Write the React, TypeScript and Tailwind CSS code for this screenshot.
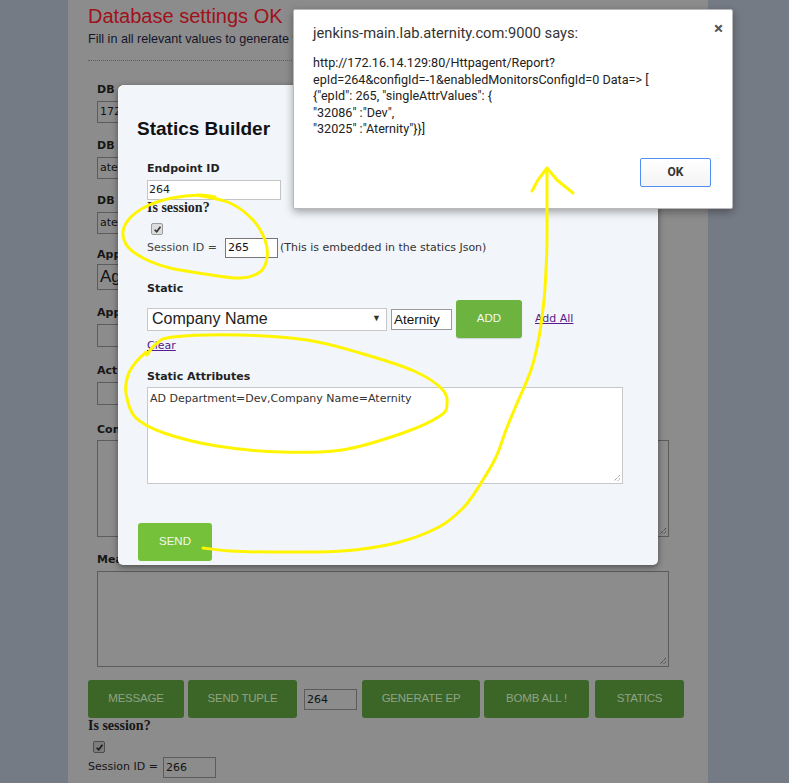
type Pt = [number, number];

// catmull-rom through the points, for the hand-drawn marker strokes
function smooth(pts: Pt[]) {
  let d = `M${pts[0][0]},${pts[0][1]}`;
  for (let i = 0; i < pts.length - 1; i++) {
    const p0 = pts[i - 1] || pts[i];
    const p1 = pts[i];
    const p2 = pts[i + 1];
    const p3 = pts[i + 2] || p2;
    const c1x = p1[0] + (p2[0] - p0[0]) / 6;
    const c1y = p1[1] + (p2[1] - p0[1]) / 6;
    const c2x = p2[0] - (p3[0] - p1[0]) / 6;
    const c2y = p2[1] - (p3[1] - p1[1]) / 6;
    d += ` C${c1x},${c1y} ${c2x},${c2y} ${p2[0]},${p2[1]}`;
  }
  return d;
}

const loopSession: Pt[] = [
  [197, 195], [230, 203], [253, 220], [265, 240], [267, 258], [260, 272], [240, 278],
  [205, 274], [170, 268], [145, 259], [128, 247], [123, 232], [130, 218], [147, 206],
  [172, 198], [200, 195], [215, 197],
];

const loopAttrs: Pt[] = [
  [147, 355], [156, 344], [173, 337], [240, 335], [307, 340], [360, 353], [414, 371],
  [442, 389], [447, 404], [440, 416], [403, 433], [342, 450], [281, 452], [217, 446],
  [164, 433], [135, 417], [126, 393], [128, 375], [136, 362], [146, 352],
];

const arrow: Pt[] = [
  [203, 548], [230, 551], [271, 552], [342, 551], [396, 543], [439, 527], [464, 507],
  [481, 483], [496, 457], [506, 430], [515, 408], [531, 370], [539, 337], [544, 300],
  [546, 270], [547, 240], [547, 200], [547, 169],
];

function Check({ dim }: { dim?: boolean }) {
  return (
    <span
      className={
        dim
          ? "flex h-[12px] w-[12px] items-center justify-center rounded-[2px] border border-[#4d4d4d] bg-[#7d7d7d]"
          : "flex h-[12px] w-[12px] items-center justify-center rounded-[2px] border border-[#9c9c9c] bg-[#dcdcdc]"
      }
    >
      <svg viewBox="0 0 10 10" className="h-[9px] w-[9px]">
        <path d="M1.8 5.3 L4.1 7.6 L8.3 2" fill="none" stroke={dim ? "#1c1c1c" : "#333"} strokeWidth="1.8" />
      </svg>
    </span>
  );
}

function Grip({ color }: { color: string }) {
  return (
    <svg viewBox="0 0 8 8" className="absolute bottom-[1px] right-[1px] h-[8px] w-[8px]">
      <path d="M7 1 L1 7 M7 4.5 L4.5 7" stroke={color} strokeWidth="1" strokeDasharray="1 1" />
    </svg>
  );
}

function PageButton({ label, className }: { label: string; className: string }) {
  return (
    <div
      className={`flex h-[38px] shrink-0 items-center justify-center rounded-[3px] bg-[#3c6528] font-['Liberation_Sans',sans-serif] text-[11.5px] tracking-[-0.2px] text-[#8ea484] ${className}`}
    >
      {label}
    </div>
  );
}

export default function App() {
  const dimLabel = "font-bold leading-[16px] text-[#161616]";
  const dimInput = "border border-[#5c5c5c] bg-[#8c8c8c] px-[2px] text-[#121212]";

  return (
    <div className="relative h-[783px] w-[789px] overflow-hidden bg-[#757b85]">
      {/* page behind the dialogs */}
      <div className="ml-[68px] h-full w-[640px] bg-[#8c8c8c] pl-[20px] pr-[20px] font-['DejaVu_Sans',sans-serif] text-[11px] text-[#151515]">
        <h1 className="pt-[4px] font-['Liberation_Sans',sans-serif] text-[20px] leading-[24px] text-[#a0111b]">
          Database settings OK
        </h1>
        <p className="mt-[3px] whitespace-nowrap font-['Liberation_Sans',sans-serif] text-[12.6px] leading-[16px] text-[#15152a]">
          Fill in all relevant values to generate the simulation data and press one of the buttons below
        </p>
        <div className="mt-[13px] border-t border-dotted border-[#5e5e5e]" />

        <div className="pl-[9px]">
          <div className={`mt-[21px] ${dimLabel}`}>DB Server:</div>
          <div className={`mt-[3px] h-[22px] w-[220px] leading-[20px] ${dimInput}`}>172.16.14.129</div>

          <div className={`mt-[15px] ${dimLabel}`}>DB User</div>
          <div className={`mt-[3px] h-[22px] w-[220px] leading-[20px] ${dimInput}`}>aternity</div>

          <div className={`mt-[14px] ${dimLabel}`}>DB Password</div>
          <div className={`mt-[3px] h-[22px] w-[220px] leading-[20px] ${dimInput}`}>aternity</div>

          <div className={`mt-[13px] ${dimLabel}`}>Application</div>
          <div className={`mt-[1px] h-[26px] w-[260px] font-['Liberation_Sans',sans-serif] text-[17px] leading-[24px] ${dimInput}`}>
            Agent
          </div>

          <div className={`mt-[15px] ${dimLabel}`}>App Version</div>
          <div className={`mt-[3px] h-[23px] w-[220px] ${dimInput}`} />

          <div className={`mt-[16px] ${dimLabel}`}>Activity</div>
          <div className={`mt-[3px] h-[23px] w-[220px] ${dimInput}`} />

          <div className={`mt-[17px] ${dimLabel}`}>Context</div>
          <div className={`relative mt-[2px] h-[97px] w-[572px] ${dimInput}`}>
            <Grip color="#2a2a2a" />
          </div>

          <div className="mt-[15px] flex items-center leading-[16px]">
            <span className="w-[93px] font-bold text-[#161616]">Measurements</span>
            <span className="text-[#2d1b5e] underline">Measurement template help [?]</span>
          </div>
          <div className={`relative mt-[3px] h-[96px] w-[572px] ${dimInput}`}>
            <Grip color="#2a2a2a" />
          </div>
        </div>

        <div className="mt-[13px] flex items-center">
          <PageButton label="MESSAGE" className="w-[96px]" />
          <PageButton label="SEND TUPLE" className="ml-[4px] w-[109px]" />
          <div className={`ml-[7px] h-[21px] w-[53px] shrink-0 leading-[19px] ${dimInput}`}>264</div>
          <PageButton label="GENERATE EP" className="ml-[5px] w-[118px]" />
          <PageButton label="BOMB ALL !" className="ml-[4px] w-[105px]" />
          <PageButton label="STATICS" className="ml-[6px] w-[89px]" />
        </div>
        <div className="font-['Liberation_Serif',serif] text-[14px] font-bold leading-[16px] text-[#161616]">
          Is session?
        </div>
        <div className="ml-[5px] mt-[7px]">
          <Check dim />
        </div>
        <div className="mt-[4px] flex items-center">
          <span className="text-[#161616]">Session ID =</span>
          <div className={`ml-[5px] h-[21px] w-[53px] leading-[19px] ${dimInput}`}>266</div>
        </div>
      </div>

      {/* Statics Builder modal */}
      <div className="absolute left-[118px] top-[85px] h-[480px] w-[540px] rounded-[5px] bg-[#f2f5fa] pl-[19px] pt-[32px] font-['DejaVu_Sans',sans-serif] text-[11px] text-[#222] shadow-[0_2px_6px_rgba(0,0,0,0.45)]">
        <h2 className="font-['Liberation_Sans',sans-serif] text-[19px] font-bold leading-[24px] text-[#111]">
          Statics Builder
        </h2>
        <div className="pl-[10px]">
          <div className="mt-[20px] font-bold leading-[16px]">Endpoint ID</div>
          <div className="mt-[3px] h-[20px] w-[134px] border border-[#c4c4c4] bg-white px-[1px] leading-[18px] text-[#222]">
            264
          </div>
          <div className="font-['Liberation_Serif',serif] text-[14px] font-bold leading-[16px] text-[#222]">
            Is session?
          </div>
          <div className="ml-[4px] mt-[7px]">
            <Check />
          </div>
          <div className="mt-[3px] flex items-center">
            <span className="text-[#444]">Session ID =</span>
            <div className="ml-[8px] h-[20px] w-[53px] border border-[#767676] bg-white px-[2px] leading-[18px] text-[#111]">
              265
            </div>
            <span className="ml-[2px] text-[#333]">(This is embedded in the statics Json)</span>
          </div>

          <div className="mt-[23px] font-bold leading-[16px]">Static</div>
          <div className="mt-[3px] flex h-[38px] items-center">
            <div className="flex h-[23px] w-[240px] items-center justify-between border border-[#c8c8c8] bg-white pl-[4px] pr-[5px] font-['Liberation_Sans',sans-serif] text-[16px] text-[#222]">
              <span>Company Name</span>
              <span className="text-[9px] text-[#333]">▼</span>
            </div>
            <div className="ml-[4px] h-[21px] w-[61px] border border-[#9a9a9a] bg-white pl-[2px] font-['Liberation_Sans',sans-serif] text-[13.5px] leading-[19px] text-[#111]">
              Aternity
            </div>
            <div className="ml-[4px] flex h-[38px] w-[66px] items-center justify-center rounded-[3px] bg-[#6cb33f] font-['Liberation_Sans',sans-serif] text-[11.5px] text-[#f4f8ef] shadow-[0_1px_1px_rgba(0,0,0,0.15)]">
              ADD
            </div>
            <span className="ml-[13px] text-[#551a8b] underline">Add All</span>
          </div>
          <div className="leading-[16px] text-[#551a8b] underline">Clear</div>

          <div className="mt-[15px] font-bold leading-[16px]">Static Attributes</div>
          <div className="relative mt-[2px] h-[97px] w-[476px] border border-[#c8c8c8] bg-white px-[2px] pt-[3px] text-[#333]">
            AD Department=Dev,Company Name=Aternity
            <Grip color="#777" />
          </div>
        </div>
        <div className="ml-[1px] mt-[39px] flex h-[38px] w-[74px] items-center justify-center rounded-[3px] bg-[#75c13a] font-['Liberation_Sans',sans-serif] text-[11.5px] text-[#f4f8ef]">
          SEND
        </div>
      </div>

      {/* browser alert */}
      <div className="absolute left-[293px] top-[9px] h-[200px] w-[440px] rounded-[2px] border border-[#b9b9b9] bg-white pl-[19px] pr-[21px] pt-[13px] font-['Roboto',sans-serif] shadow-[0_3px_9px_rgba(0,0,0,0.35)]">
        <div className="flex items-start justify-between">
          <span className="text-[14.7px] leading-[20px] text-[#333]">jenkins-main.lab.aternity.com:9000 says:</span>
          <span className="-mt-[5px] mr-[-12px] text-[17px] font-bold leading-[20px] text-[#555]">×</span>
        </div>
        <div className="mt-[12px] text-[12.6px] leading-[16.5px] text-[#222]">
          <div>http://172.16.14.129:80/Httpagent/Report?</div>
          <div>epId=264&amp;configId=-1&amp;enabledMonitorsConfigId=0 Data=&gt; [</div>
          <div>{'{"epId": 265, "singleAttrValues": {'}</div>
          <div>"32086" :"Dev",</div>
          <div>{'"32025" :"Aternity"}}]'}</div>
        </div>
        <div className="mt-[20px] flex justify-end">
          <div className="flex h-[29px] w-[71px] items-center justify-center rounded-[2px] border border-[#4f8ef2] bg-gradient-to-b from-white to-[#f4f4f4] text-[12px] font-bold text-[#333]">
            OK
          </div>
        </div>
      </div>

      {/* yellow marker annotations */}
      <svg className="pointer-events-none absolute left-0 top-0" width="789" height="783" viewBox="0 0 789 783">
        <g fill="none" stroke="#fff500" strokeWidth="3" strokeLinecap="round" strokeLinejoin="round">
          <path d={smooth(loopSession)} />
          <path d={smooth(loopAttrs)} />
          <path d={smooth(arrow)} />
          <path d="M532 191 L538 180 L547 168 L557 180 L573 193" />
        </g>
      </svg>
    </div>
  );
}
